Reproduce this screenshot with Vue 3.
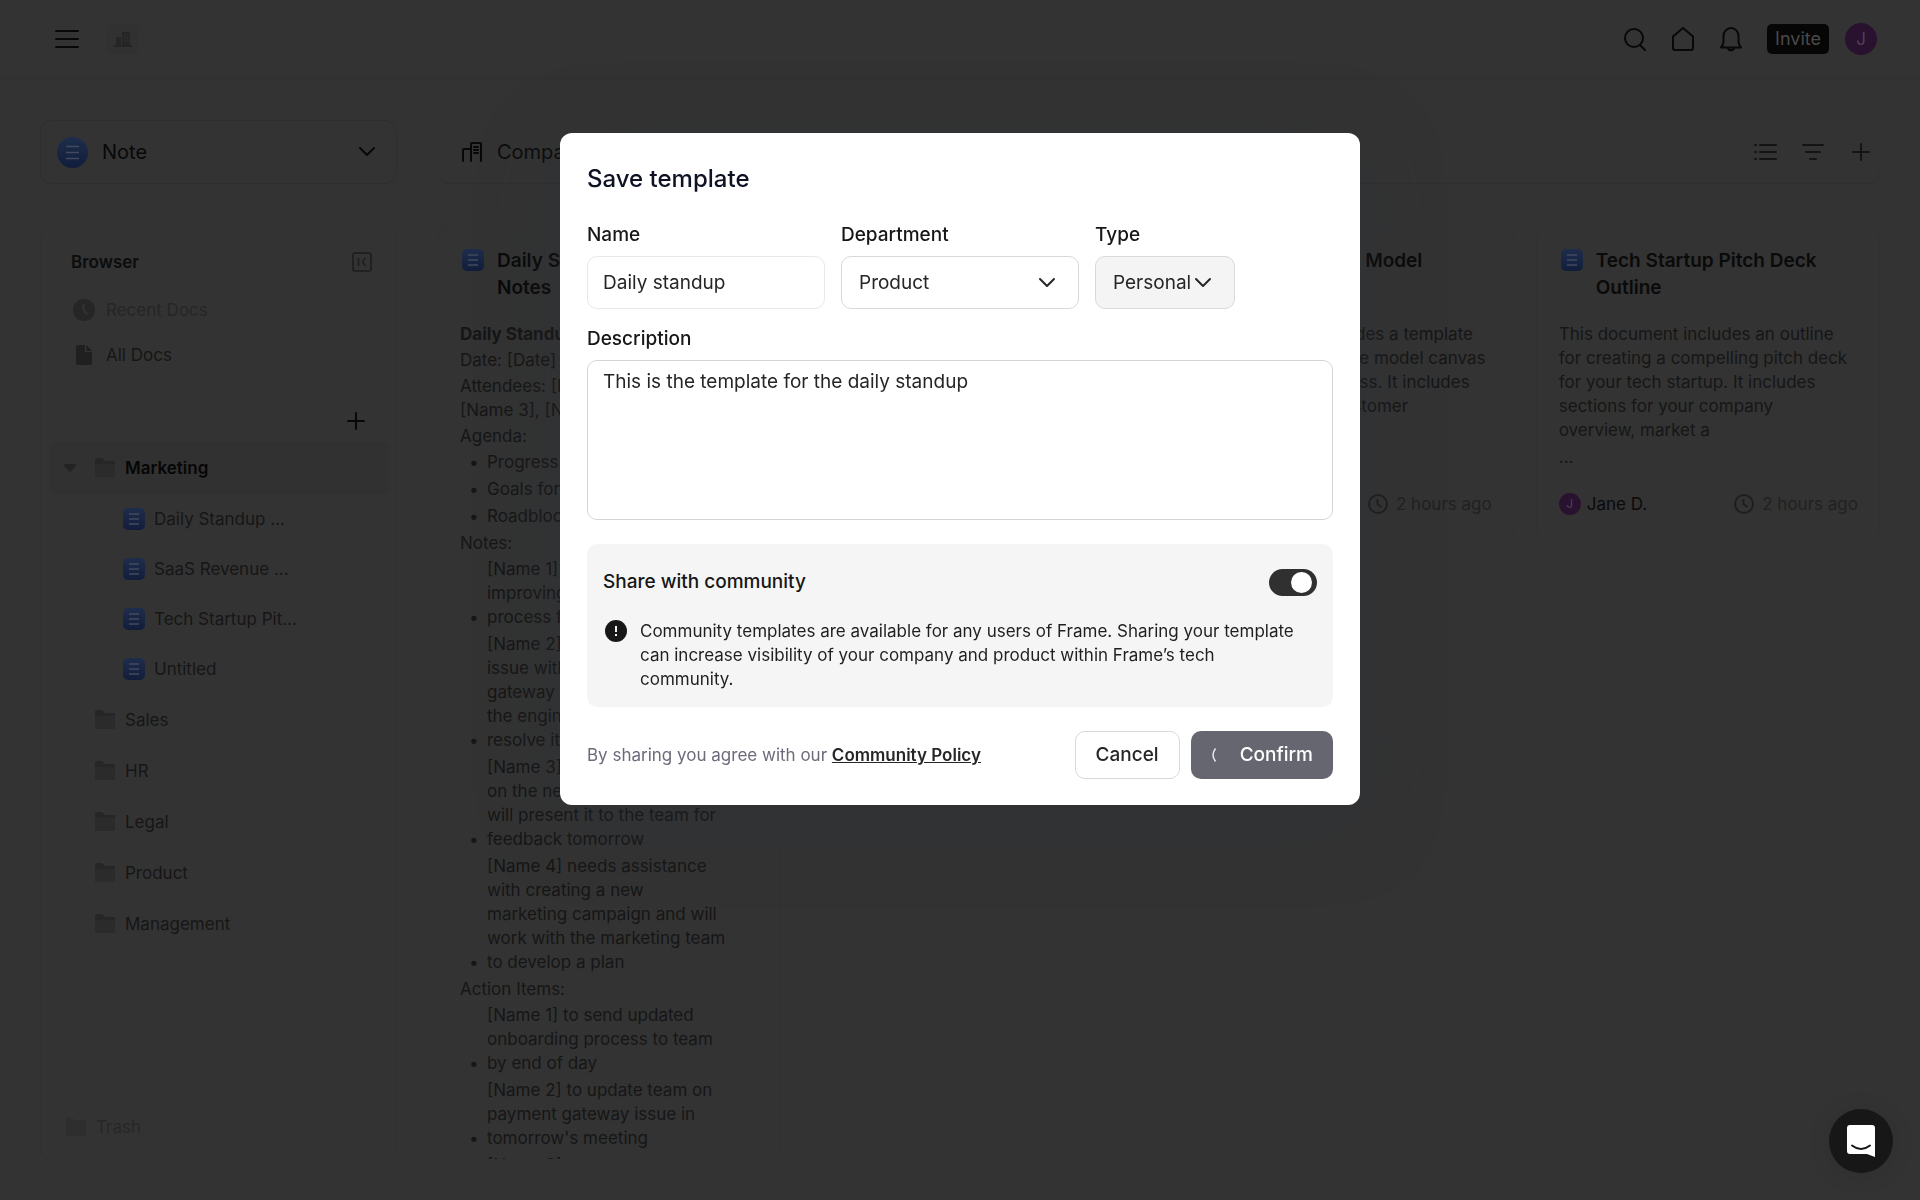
<script setup>
import { ref } from 'vue';

const form = ref({
  name: 'Daily standup',
  department: 'Product',
  type: 'Personal',
  description: 'This is the template for the daily standup',
  share: true
});

const docs = ['Daily Standup ...', 'SaaS Revenue ...', 'Tech Startup Pit...', 'Untitled'];
const folders = ['Sales', 'HR', 'Legal', 'Product', 'Management'];

const agenda = ['Progress updates', 'Goals for the day', 'Roadblocks'];
const notes = [
  '[Name 1] is working on\nimproving the onboarding\nprocess for new users',
  '[Name 2] is having an\nissue with the payment\ngateway and will meet with\nthe engineering team to\nresolve it today',
  '[Name 3] has been working\non the new design and\nwill present it to the team for\nfeedback tomorrow',
  '[Name 4] needs assistance\nwith creating a new\nmarketing campaign and will\nwork with the marketing team\nto develop a plan'
];
const actions = [
  '[Name 1] to send updated\nonboarding process to team\nby end of day',
  '[Name 2] to update team on\npayment gateway issue in\ntomorrow\'s meeting',
  '[Name 3] to'
];

const cards = [
  { title: 'Untitled', text: 'This document is empty' },
  {
    title: 'SaaS Revenue Model',
    text: 'This document includes a template\nfor creating a revenue model canvas\nfor your SaaS business. It includes\nsections for your customer'
  },
  {
    title: 'Tech Startup Pitch Deck Outline',
    text: 'This document includes an outline\nfor creating a compelling pitch deck\nfor your tech startup. It includes\nsections for your company\noverview, market a',
    more: true
  }
];

const save = () => {
  console.log('Template saved:', form.value);
};
</script>

<template>
  <div class="app">
    <header class="topbar">
      <button class="icon-btn" aria-label="Menu">
        <svg width="26" height="26" viewBox="0 0 26 26"><path d="M2 5h22M2 13h22M2 21h22" class="line" /></svg>
      </button>
      <div class="logo">
        <svg width="18" height="18" viewBox="0 0 18 18"><path d="M2 7h5v9H2zM8 2h8v14H8zM0 15h18v2H0z" fill="#252525" /><path d="M10 5h5M10 8h5M10 11h5" stroke="#303030" /></svg>
      </div>
      <nav class="top-right">
        <button class="icon-btn" aria-label="Search">
          <svg width="24" height="26" viewBox="0 0 24 26"><circle cx="11" cy="12" r="9" class="line" /><path d="M17 19l5 5" class="line" /></svg>
        </button>
        <button class="icon-btn" aria-label="Home">
          <svg width="24" height="26" viewBox="0 0 24 26"><path d="M2 10.500L12 2l10 8.500V22q0 2-2 2H4q-2 0-2-2z" class="line" /></svg>
        </button>
        <button class="icon-btn" aria-label="Notifications">
          <svg width="24" height="26" viewBox="0 0 24 26"><path d="M2 21.500c2-2 2.500-4 2.500-6V10a7.500 8 0 0 1 15 0v5.500c0 2 .5 4 2.500 6zM9 22c.5 3 5.500 3 6 0" class="line" /></svg>
        </button>
        <button class="invite">Invite</button>
        <span class="avatar">J</span>
      </nav>
    </header>

    <div class="body">
      <aside class="side">
        <button class="note-select">
          <svg width="31" height="31" viewBox="0 0 31 31">
            <defs>
              <linearGradient id="blue" x1="0" y1="0" x2="0" y2="1"><stop offset="0" stop-color="#1f2d4c" /><stop offset="1" stop-color="#111d3b" /></linearGradient>
            </defs>
            <circle cx="15.500" cy="15.500" r="15.500" fill="url(#blue)" />
            <path d="M9 9.500h13M9 15.500h13M9 21.500h13" stroke="#414a5e" stroke-width="1.500" />
          </svg>
          <span>Note</span>
          <svg class="chev" width="18" height="12" viewBox="0 0 18 12"><path d="M2 2l7 7 7-7" class="line" /></svg>
        </button>

        <div class="panel browser">
          <div class="browser-head">
            <h2>Browser</h2>
            <svg width="22" height="22" viewBox="0 0 22 22"><rect x="2" y="2" width="18" height="18" rx="2" fill="none" stroke="#1c1c1c" stroke-width="1.500" /><path d="M7.500 7v8M14.500 7q-5 4 0 8" fill="none" stroke="#1c1c1c" stroke-width="1.500" /></svg>
          </div>
          <a href="#" class="quick faded">
            <svg width="24" height="24" viewBox="0 0 24 24"><circle cx="12" cy="12" r="11" fill="#262626" /><path d="M11.500 6v6l4 5" fill="none" stroke="#333" stroke-width="2" /></svg>
            Recent Docs
          </a>
          <a href="#" class="quick">
            <svg width="24" height="24" viewBox="0 0 24 24"><path d="M6 2h7v7h7v11q0 2-2 2H6q-2 0-2-2V4q0-2 2-2zM14.500 2l5.500 6h-5.500z" fill="#202020" /></svg>
            All Docs
          </a>
          <div class="add-row">
            <button class="icon-btn" aria-label="Add folder">
              <svg width="20" height="20" viewBox="0 0 20 20"><path d="M10 2v16M2 10h16" class="line" /></svg>
            </button>
          </div>
          <div class="tree">
            <a href="#" class="folder active">
              <svg class="caret" width="12" height="8" viewBox="0 0 12 8"><path d="M1 0h10q2 1 0 3L6 8 1 3q-2-2 0-3z" fill="#232323" /></svg>
              <svg width="20" height="20" viewBox="0 0 20 20"><path d="M0 2q0-2 2-2h5l3 3h10v15H0z" fill="#262626" /><path d="M0 6h20v13H0z" fill="#2b2b2b" /></svg>
              Marketing
            </a>
            <a v-for="doc in docs" :key="doc" href="#" class="doc">
              <svg width="22" height="22" viewBox="0 0 22 22"><rect width="22" height="22" rx="5" fill="url(#blue)" /><path d="M6 6h10M6 11h10M6 16h10" stroke="#414a5e" stroke-width="1.500" /></svg>
              {{ doc }}
            </a>
            <a v-for="folder in folders" :key="folder" href="#" class="folder">
              <svg width="20" height="20" viewBox="0 0 20 20"><path d="M0 2q0-2 2-2h5l3 3h10v15H0z" fill="#262626" /><path d="M0 6h20v13H0z" fill="#2b2b2b" /></svg>
              {{ folder }}
            </a>
          </div>
          <a href="#" class="trash">
            <svg width="20" height="20" viewBox="0 0 20 20"><path d="M0 0l10 3h10v16H0z" fill="#2e2e2e" /></svg>
            Trash
          </a>
        </div>
      </aside>

      <main class="content">
        <div class="content-head">
          <svg width="20" height="20" viewBox="0 0 20 20"><path d="M1 19V8q0-1 1-1h7M9 19V2q0-1 1-1h8q1 0 1 1v17M12 5h4M12 8h4M12 11h4" class="line" /></svg>
          <h1>Company</h1>
          <div class="tools">
            <button class="icon-btn" aria-label="List view">
              <svg width="24" height="20" viewBox="0 0 24 20"><path d="M7 3h16M7 10h16M7 17h16M2 3h1M2 10h1M2 17h1" class="line soft" /></svg>
            </button>
            <button class="icon-btn" aria-label="Filter">
              <svg width="24" height="20" viewBox="0 0 24 20"><path d="M2 3h20M5 10h14M9 17h6" class="line soft" /></svg>
            </button>
            <button class="icon-btn" aria-label="Add document">
              <svg width="24" height="20" viewBox="0 0 24 20"><path d="M12 2v16M4 10h16" class="line soft" /></svg>
            </button>
          </div>
        </div>

        <div class="cards">
          <article class="panel card tall">
            <div class="card-title">
              <svg width="22" height="22" viewBox="0 0 22 22"><rect width="22" height="22" rx="5" fill="url(#blue)" /><path d="M6 6h10M6 11h10M6 16h10" stroke="#414a5e" stroke-width="1.500" /></svg>
              <h3>Daily Standup Meeting Notes</h3>
            </div>
            <div class="doc-text">
              <p><b>Daily Standup Meeting Notes</b></p>
              <p>Date: [Date]</p>
              <p>Attendees: [Name 1], [Name 2], [Name 3], [Name 4]</p>
              <p>Agenda:</p>
              <ul><li v-for="item in agenda" :key="item"><span>{{ item }}</span></li></ul>
              <p>Notes:</p>
              <ul><li v-for="item in notes" :key="item"><span>{{ item }}</span></li></ul>
              <p>Action Items:</p>
              <ul><li v-for="item in actions" :key="item"><span>{{ item }}</span></li></ul>
            </div>
          </article>

          <article v-for="card in cards" :key="card.title" class="panel card">
            <div class="card-title">
              <svg width="22" height="22" viewBox="0 0 22 22"><rect width="22" height="22" rx="5" fill="url(#blue)" /><path d="M6 6h10M6 11h10M6 16h10" stroke="#414a5e" stroke-width="1.500" /></svg>
              <h3>{{ card.title }}</h3>
            </div>
            <div class="summary">
              <p>{{ card.text }}</p>
              <p v-if="card.more">...</p>
            </div>
            <footer class="card-foot">
              <span class="avatar small">J</span>
              <span class="author">Jane D.</span>
              <span class="time">
                <svg width="20" height="20" viewBox="0 0 20 20"><circle cx="10" cy="10" r="9" fill="none" stroke="#1e1e1e" stroke-width="2" /><path d="M9.500 5v5l4 3" fill="none" stroke="#1e1e1e" stroke-width="2" /></svg>
                2 hours ago
              </span>
            </footer>
          </article>
        </div>
      </main>
    </div>

    <div class="overlay">
      <form class="modal" role="dialog" aria-labelledby="dialog-title" @submit.prevent="save">
        <h2 id="dialog-title">Save template</h2>
        <div class="fields">
          <div class="field wide">
            <label for="name">Name</label>
            <input id="name" v-model="form.name" type="text">
          </div>
          <div class="field wide">
            <label for="department">Department</label>
            <div class="select">
              <select id="department" v-model="form.department">
                <option>Product</option>
                <option>Marketing</option>
              </select>
              <svg width="18" height="12" viewBox="0 0 18 12"><path d="M2 2l7 7 7-7" class="line dark" /></svg>
            </div>
          </div>
          <div class="field">
            <label for="type">Type</label>
            <div class="select grey">
              <select id="type" v-model="form.type">
                <option>Personal</option>
                <option>Company</option>
              </select>
              <svg width="18" height="12" viewBox="0 0 18 12"><path d="M2 2l7 7 7-7" class="line dark" /></svg>
            </div>
          </div>
        </div>
        <div class="field">
          <label for="description">Description</label>
          <textarea id="description" v-model="form.description"></textarea>
        </div>

        <div class="share">
          <div class="share-head">
            <label for="share">Share with community</label>
            <input id="share" v-model="form.share" type="checkbox" role="switch">
          </div>
          <div class="share-info">
            <svg width="24" height="24" viewBox="0 0 24 24"><circle cx="12" cy="12" r="11" fill="#171717" /><path d="M12 7v6M12 15v2" stroke="#f5f5f5" stroke-width="2" /></svg>
            <p>Community templates are available for any users of Frame. Sharing your template can increase visibility of your company and product within Frame’s tech community.</p>
          </div>
        </div>

        <div class="actions">
          <p>By sharing you agree with our <a href="#">Community Policy</a></p>
          <button type="button" class="cancel">Cancel</button>
          <button type="submit" class="confirm">
            <svg width="14" height="16" viewBox="0 0 14 16"><path d="M4.500 1.500Q-.5 8 4.500 14.500" fill="none" stroke="#e8e8f0" stroke-width="1.500" /></svg>
            Confirm
          </button>
        </div>
      </form>
    </div>

    <button class="chat" aria-label="Open chat">
      <svg width="30" height="34" viewBox="0 0 30 34"><path d="M4 1h22q3 0 3 3v29l-8-3H4q-3 0-3-3V4q0-3 3-3z" fill="#fff" /><path d="M6 21.500q9 7 18 0" fill="none" stroke="#171717" stroke-width="2" stroke-linecap="round" /></svg>
    </button>
  </div>
</template>

<style>
body {
  background-color: #333;
}
</style>

<style scoped>
* {
  box-sizing: border-box;
}

.app {
  height: 100vh;
  display: flex;
  flex-direction: column;
  overflow: hidden;
  background-color: #333;
  color: #161616;
  font-family: Inter, "Liberation Sans", sans-serif;
  font-size: 17px;
  line-height: 24px;
}

h1, h2, h3, p, ul {
  margin: 0;
  padding: 0;
}

a {
  color: inherit;
  text-decoration: none;
}

button {
  font: inherit;
  color: inherit;
  border: none;
  background: none;
  padding: 0;
  cursor: pointer;
}

svg {
  flex: none;
  display: block;
}

.line {
  fill: none;
  stroke: #080808;
  stroke-width: 2;
  stroke-linecap: round;
  stroke-linejoin: round;
}

.line.soft {
  stroke: #141414;
}

.line.dark {
  stroke: #262626;
}

.topbar {
  flex: none;
  height: 79px;
  display: flex;
  align-items: center;
  padding: 0 43px 0 54px;
  border-bottom: 1px solid #2f2f2f;
}

.logo {
  width: 32px;
  height: 30px;
  margin-left: 27px;
  display: flex;
  align-items: center;
  justify-content: center;
  background-color: #313131;
  border-radius: 6px;
}

.top-right {
  margin-left: auto;
  display: flex;
  align-items: center;
  gap: 24px;
}

.invite {
  height: 30px;
  padding: 0 8px;
  background-color: #060606;
  color: #4a4a4a;
  border-radius: 5px;
  font-size: 18px;
}

.avatar {
  width: 32px;
  height: 32px;
  margin-left: -8px;
  border-radius: 50%;
  background-color: #28122f;
  color: #4f4156;
  text-align: center;
  line-height: 32px;
}

.avatar.small {
  width: 22px;
  height: 22px;
  margin: 0;
  font-size: 12px;
  line-height: 22px;
}

.body {
  flex: 1;
  min-height: 0;
  display: flex;
  gap: 40px;
  padding: 41px 40px;
}

.side {
  flex: none;
  width: 357px;
  display: flex;
  flex-direction: column;
  gap: 44px;
}

.note-select {
  height: 64px;
  display: flex;
  align-items: center;
  gap: 14px;
  padding: 0 20px 0 16px;
  border: 1px solid #2e2e2e;
  border-radius: 12px;
  color: #080808;
  font-size: 20px;
}

.chev {
  margin-left: auto;
}

.panel {
  border: 1px solid #313131;
  border-radius: 10px;
}

.browser {
  flex: 1;
  display: flex;
  flex-direction: column;
  padding: 21px 8px 19px;
}

.browser-head {
  display: flex;
  align-items: center;
  justify-content: space-between;
  padding: 0 15px 0 22px;
}

.browser-head h2 {
  font-size: 17px;
  font-weight: 600;
  color: #0c0c0c;
}

.quick {
  display: flex;
  align-items: center;
  gap: 10px;
  padding-left: 23px;
  margin-top: 21px;
}

.browser-head + .quick {
  margin-top: 24px;
}

.faded {
  color: #262626;
}

.add-row {
  display: flex;
  justify-content: flex-end;
  padding: 12px 22px 11px;
  margin-top: 31px;
  border-top: 1px solid #313131;
}

.folder {
  height: 51px;
  display: flex;
  align-items: center;
  gap: 10px;
  padding-left: 46px;
}

.folder.active {
  height: 52px;
  padding-left: 15px;
  background-color: #313131;
  border-radius: 6px;
  color: #060606;
  font-weight: 600;
}

.caret {
  margin-right: 9px;
}

.doc {
  height: 50px;
  display: flex;
  align-items: center;
  gap: 9px;
  padding-left: 74px;
}

.trash {
  display: flex;
  align-items: center;
  gap: 10px;
  margin-top: auto;
  padding-left: 17px;
  color: #272727;
}

.content {
  flex: 1;
  min-width: 0;
  display: flex;
  flex-direction: column;
  gap: 44px;
}

.content-head {
  height: 64px;
  flex: none;
  display: flex;
  align-items: center;
  gap: 15px;
  padding: 0 6px 0 24px;
  border: 1px solid #323232;
  border-bottom-color: #2f2f2f;
  border-radius: 12px;
}

.content-head h1 {
  font-size: 20px;
  font-weight: 400;
  color: #0c0c0c;
}

.tools {
  margin-left: auto;
  display: flex;
  gap: 24px;
}

.cards {
  flex: 1;
  min-height: 0;
  display: grid;
  grid-template-columns: repeat(4, 1fr);
  grid-template-rows: 100%;
  align-items: start;
  gap: 22px;
}

.card {
  min-height: 311px;
  display: flex;
  flex-direction: column;
  padding: 18px 21px 22px 22px;
}

.card.tall {
  height: 100%;
  padding-bottom: 0;
  overflow: hidden;
  border-bottom: none;
}

.card-title {
  display: flex;
  gap: 13px;
  padding-left: 2px;
}

.card-title svg {
  margin-top: 2px;
}

.card-title h3 {
  min-height: 54px;
  font-size: 19px;
  line-height: 27px;
  font-weight: 600;
  color: #0a0a0a;
}

.doc-text,
.summary {
  margin-top: 21px;
}

.doc-text p {
  margin-bottom: 2px;
}

.doc-text ul {
  list-style: none;
}

.doc-text li {
  display: flex;
  align-items: flex-end;
  margin-bottom: 3px;
  white-space: pre;
}

.doc-text li::before {
  content: "•";
  width: 18px;
  padding-left: 9px;
}

.summary p {
  white-space: pre-line;
}

.summary p + p {
  margin-top: 3px;
}

.card-foot {
  display: flex;
  align-items: center;
  gap: 6px;
  margin-top: auto;
}

.author {
  color: #0a0a0a;
}

.time {
  margin-left: auto;
  display: flex;
  align-items: center;
  gap: 8px;
  color: #212121;
}

.overlay {
  position: fixed;
  inset: 0;
  display: flex;
  justify-content: center;
  align-items: flex-start;
  padding-top: 133px;
}

.modal {
  width: 800px;
  display: flex;
  flex-direction: column;
  padding: 27px 27px 26px;
  background-color: #fff;
  border-radius: 12px;
  box-shadow: 0 16px 80px rgba(42, 50, 58, 0.35);
  color: #262626;
}

.modal h2 {
  font-size: 24px;
  line-height: 38px;
  font-weight: 500;
  color: #0f1225;
}

.fields {
  display: flex;
  gap: 16px;
  margin: 24px 0 17px;
}

.field {
  display: flex;
  flex-direction: column;
  gap: 8px;
}

.field.wide {
  width: 238px;
}

.modal label {
  font-size: 19px;
  line-height: 26px;
  font-weight: 500;
  color: #171717;
}

.field input,
.field textarea,
.select {
  width: 100%;
  height: 53px;
  padding: 0 15px;
  border: 1px solid #e8e8e8;
  border-radius: 10px;
  background-color: #fff;
  font: inherit;
  font-size: 19px;
  color: #262626;
}

.field textarea {
  display: block;
  height: 160px;
  padding-top: 9px;
  border-color: #d4d4d4;
  resize: none;
}

.select {
  display: flex;
  align-items: center;
  padding: 0 22px 0 17px;
  border-color: #d9d9d9;
}

.select select {
  flex: 1;
  min-width: 0;
  appearance: none;
  border: none;
  padding: 0;
  background: none;
  font: inherit;
  color: inherit;
}

.select.grey {
  width: 140px;
  background-color: #f4f4f4;
}

.share {
  margin: 24px 0;
  padding: 23px 16px 16px;
  background-color: #f5f5f5;
  border-radius: 10px;
}

.share-head {
  display: flex;
  align-items: center;
  justify-content: space-between;
  margin-bottom: 23px;
}

.share-head input {
  appearance: none;
  width: 48px;
  height: 27px;
  margin: 2px 0 0;
  padding: 3px;
  display: flex;
  border-radius: 14px;
  background-color: #303030;
  cursor: pointer;
}

.share-head input::before {
  content: "";
  width: 21px;
  height: 21px;
  border-radius: 50%;
  background-color: #fff;
}

.share-head input:checked {
  justify-content: flex-end;
  padding-right: 5px;
}

.share-info {
  display: flex;
  gap: 12px;
  padding: 0 12px 0 1px;
  color: #1f1f1f;
}

.actions {
  display: flex;
  align-items: center;
  gap: 11px;
}

.actions p {
  margin-right: auto;
  color: #6b6b7b;
}

.actions a {
  color: #262626;
  font-weight: 600;
  text-decoration: underline;
}

.cancel,
.confirm {
  height: 48px;
  padding: 0 20px;
  border-radius: 10px;
  font-size: 19px;
  font-weight: 500;
}

.cancel {
  border: 1px solid #d9d9d9;
}

.confirm {
  display: flex;
  align-items: center;
  gap: 15px;
  background-color: #666671;
  color: #fff;
}

.chat {
  position: fixed;
  right: 27px;
  bottom: 27px;
  width: 64px;
  height: 64px;
  display: flex;
  align-items: center;
  justify-content: center;
  border-radius: 50%;
  background-color: #171717;
  box-shadow: 0 2px 24px rgba(0, 0, 0, 0.1);
}
</style>
